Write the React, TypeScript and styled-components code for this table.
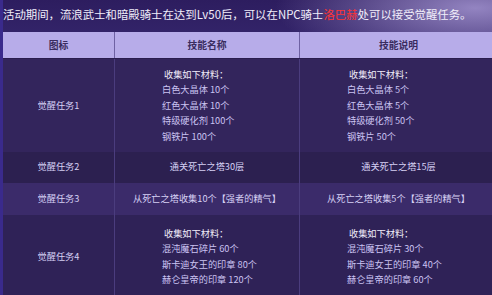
import styled, { createGlobalStyle } from "styled-components";

const GlobalStyle = createGlobalStyle`
  html, body {
    margin: 0;
    padding: 0;
    width: 492px;
    height: 295px;
    overflow: hidden;
    background: #2e1f5e;
  }
`;

const Page = styled.div`
  width: 492px;
  height: 295px;
  overflow: hidden;
  box-sizing: border-box;
  padding-left: 3px;
  font-family: "Noto Sans CJK SC", "Noto Sans", sans-serif;
  background:
    radial-gradient(ellipse 200px 60px at 475px 8px, rgba(165, 150, 210, 0.85), rgba(165, 150, 210, 0) 100%),
    linear-gradient(90deg, #3a2a8c 0px, #3a2a8c 3px, transparent 3px),
    linear-gradient(180deg, #2d1d5f 0px, #34256b 40px, #2e2060 100%);
`;

const Intro = styled.p`
  margin: 0;
  padding-top: 5px;
  height: 32px;
  box-sizing: border-box;
  font-size: 11.4px;
  line-height: 18px;
  color: #f1eefa;
  white-space: nowrap;
`;

const Npc = styled.span`
  color: #ff3434;
`;

const Table = styled.table`
  border-collapse: collapse;
  table-layout: fixed;
  width: 492px;
  font-size: 9.2px;
`;

const HeadCell = styled.th<{ $w: number }>`
  width: ${(p) => p.$w}px;
  height: 26px;
  padding: 0;
  background: #b7ace9;
  color: #3a2c5f;
  font-size: 9.8px;
  font-weight: 700;
  text-align: center;
  border-left: 1px solid #6e61a3;
  border-bottom: 1px solid #2a1d4e;
  &:first-child {
    border-left: none;
  }
`;

const Row = styled.tr<{ $bg: string; $h: number }>`
  background: ${(p) => p.$bg};
  height: ${(p) => p.$h}px;
`;

const Cell = styled.td`
  padding: 0;
  text-align: center;
  vertical-align: middle;
  color: #d6d0f4;
  border-left: 1px solid #4b3d7e;
  line-height: 15.5px;
  &:first-child {
    border-left: none;
  }
`;

const List = styled.div`
  padding-left: 47px;
  text-align: left;
  color: #cbc3f2;
`;

const ListHead = styled.div`
  padding-left: 2px;
  color: #f0ecfa;
`;

interface Task {
  label: string;
  bg: string;
  height: number;
  name: string | string[];
  desc: string | string[];
}

const tasks: Task[] = [
  {
    label: "觉醒任务1",
    bg: "#33255c",
    height: 93,
    name: ["白色大晶体 10个", "红色大晶体 10个", "特级硬化剂 100个", "钢铁片 100个"],
    desc: ["白色大晶体 5个", "红色大晶体 5个", "特级硬化剂 50个", "钢铁片 50个"],
  },
  {
    label: "觉醒任务2",
    bg: "#2c2050",
    height: 31,
    name: "通关死亡之塔30层",
    desc: "通关死亡之塔15层",
  },
  {
    label: "觉醒任务3",
    bg: "#3b2b6a",
    height: 32,
    name: "从死亡之塔收集10个【强者的精气】",
    desc: "从死亡之塔收集5个【强者的精气】",
  },
  {
    label: "觉醒任务4",
    bg: "#2f2257",
    height: 84,
    name: ["混沌魔石碎片 60个", "斯卡迪女王的印章 80个", "赫仑皇帝的印章 120个"],
    desc: ["混沌魔石碎片 30个", "斯卡迪女王的印章 40个", "赫仑皇帝的印章 60个"],
  },
];

const Content = ({ value }: { value: string | string[] }) =>
  Array.isArray(value) ? (
    <List>
      <ListHead>收集如下材料：</ListHead>
      {value.map((line) => (
        <div key={line}>{line}</div>
      ))}
    </List>
  ) : (
    <>{value}</>
  );

const App = () => (
  <Page>
    <GlobalStyle />
    <Intro>
      活动期间，流浪武士和暗殿骑士在达到Lv50后，可以在NPC骑士<Npc>洛巴赫</Npc>处可以接受觉醒任务。
    </Intro>
    <Table>
      <thead>
        <tr>
          <HeadCell $w={111}>图标</HeadCell>
          <HeadCell $w={184}>技能名称</HeadCell>
          <HeadCell $w={197}>技能说明</HeadCell>
        </tr>
      </thead>
      <tbody>
        {tasks.map((t) => (
          <Row key={t.label} $bg={t.bg} $h={t.height}>
            <Cell>{t.label}</Cell>
            <Cell>
              <Content value={t.name} />
            </Cell>
            <Cell>
              <Content value={t.desc} />
            </Cell>
          </Row>
        ))}
      </tbody>
    </Table>
  </Page>
);

export default App;
